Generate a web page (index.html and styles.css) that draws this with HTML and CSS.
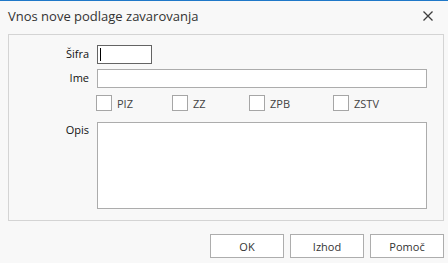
FILE: index.html
```html
<!DOCTYPE html>
<html lang="sl">
<head>
    <meta charset="UTF-8">
    <title>Vnos nove podlage zavarovanja</title>
    <link rel="stylesheet" href="styles.css">
</head>
<body>
    <div class="dialog">
        <div class="titlebar">
            <span class="title">Vnos nove podlage zavarovanja</span>
            <button class="close-btn" title="Zapri">
                <svg width="10" height="10" viewBox="0 0 10 10">
                    <path d="M0.5 0.5 L9.5 9.5 M9.5 0.5 L0.5 9.5" stroke="#3c3c3c" stroke-width="1.3" fill="none"/>
                </svg>
            </button>
        </div>

        <div class="group">
            <label class="form-label" for="sifra">Šifra</label>
            <div class="short-wrap">
                <input class="field field-short focused" id="sifra" type="text">
                <span class="caret"></span>
            </div>

            <label class="form-label" for="ime">Ime</label>
            <input class="field" id="ime" type="text">

            <span></span>
            <div class="check-row">
                <label class="check"><span class="box"></span>PIZ</label>
                <label class="check"><span class="box"></span>ZZ</label>
                <label class="check"><span class="box"></span>ZPB</label>
                <label class="check"><span class="box"></span>ZSTV</label>
            </div>

            <label class="form-label top" for="opis">Opis</label>
            <textarea class="field area" id="opis"></textarea>
        </div>

        <div class="footer">
            <button class="btn">OK</button>
            <button class="btn">Izhod</button>
            <button class="btn">Pomoč</button>
        </div>
    </div>
</body>
</html>
```

FILE: styles.css
```css
* {
  margin: 0;
  padding: 0;
  box-sizing: border-box;
  font-family: "Open Sans", "Noto Sans", sans-serif;
}

body {
  background-color: #f8f8f8;
  color: #1a1a1a;
  font-size: 11px;
  width: 448px;
  height: 263px;
  overflow: hidden;
}

.dialog {
  border-top: 1px solid #1f78c8;
  height: 263px;
}

.titlebar {
  height: 33px;
  display: flex;
  align-items: center;
  justify-content: space-between;
  padding-left: 8px;
}

.title {
  font-size: 13px;
  color: #333;
  margin-top: -3px;
}

.close-btn {
  background: none;
  border: none;
  width: 10px;
  height: 10px;
  margin-right: 15px;
  margin-top: -4px;
  display: flex;
}

.group {
  margin: 0 4px 0 8px;
  height: 187px;
  border: 1px solid #d4d4d4;
  padding-top: 10px;
  display: grid;
  grid-template-columns: 80px 330px;
  grid-template-rows: 19px 19px 17px 87px;
  column-gap: 8px;
  row-gap: 5px;
  align-content: start;
}

.group .check-row {
  margin-top: 2px;
}

.group .area {
  margin-top: 7px;
}

.form-label {
  text-align: right;
  align-self: center;
  color: #111;
  margin-top: -2px;
}

.form-label.top {
  align-self: start;
  margin-top: 7px;
}

.field {
  background: white;
  border: 1px solid #acacac;
  outline: none;
  font-size: 11px;
  height: 19px;
}

.short-wrap {
  position: relative;
  width: 55px;
}

.field-short {
  width: 55px;
}

.caret {
  position: absolute;
  left: 3px;
  top: 3px;
  width: 1px;
  height: 13px;
  background: black;
}

.focused {
  border-color: #646464;
}

.area {
  height: 87px;
  resize: none;
}

.check-row {
  display: grid;
  grid-template-columns: 76px 77px 84px auto;
  margin-left: -1px;
}

.check {
  display: flex;
  align-items: center;
  color: #444;
}

.box {
  width: 16px;
  height: 16px;
  background: white;
  border: 1px solid #a6a6a6;
  margin-right: 5px;
}

.footer {
  display: flex;
  justify-content: flex-end;
  gap: 6px;
  padding: 13px 4px 0 0;
}

.btn {
  width: 74px;
  height: 24px;
  background: white;
  border: 1px solid #adadad;
  color: #333;
  font-size: 11px;
}
```
